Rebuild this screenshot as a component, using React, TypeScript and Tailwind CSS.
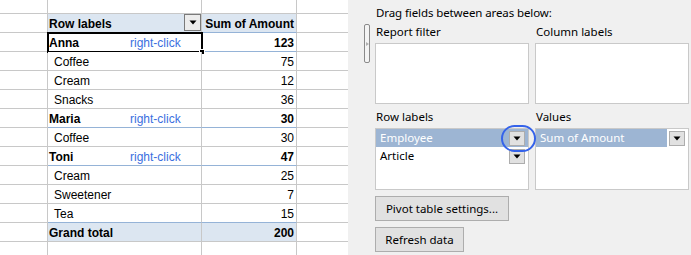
import React from "react";

type Row = {
  label: string;
  value?: string;
  kind: "top" | "header" | "group" | "item" | "total" | "blank";
  blueBottom?: boolean;
  selected?: boolean;
};

const rows: Row[] = [
  { label: "", kind: "top" },
  { label: "Row labels", value: "Sum of Amount", kind: "header", blueBottom: true },
  { label: "Anna", value: "123", kind: "group", blueBottom: true, selected: true },
  { label: "Coffee", value: "75", kind: "item" },
  { label: "Cream", value: "12", kind: "item" },
  { label: "Snacks", value: "36", kind: "item" },
  { label: "Maria", value: "30", kind: "group", blueBottom: true },
  { label: "Coffee", value: "30", kind: "item" },
  { label: "Toni", value: "47", kind: "group", blueBottom: true },
  { label: "Cream", value: "25", kind: "item" },
  { label: "Sweetener", value: "7", kind: "item" },
  { label: "Tea", value: "15", kind: "item", blueBottom: true },
  { label: "Grand total", value: "200", kind: "total" },
  { label: "", kind: "blank" },
];

function Triangle() {
  return (
    <svg width="8" height="5" viewBox="0 0 8 5">
      <path d="M0.5 0.5 H7.5 L4 4.5 Z" fill="#000" />
    </svg>
  );
}

function DropButton() {
  return (
    <div className="w-[16px] h-[15px] bg-[#e1e1e1] border border-[#adadad] flex items-center justify-center">
      <Triangle />
    </div>
  );
}

function Sheet() {
  return (
    <div className="w-[348px] h-[255px] bg-white overflow-hidden font-['Liberation_Sans',Arial,sans-serif] text-[12px] text-black">
      {rows.map((r, i) => {
        const h = r.kind === "top" ? "h-[14px]" : "h-[19px]";
        const pivotBorder = r.blueBottom ? "border-b-[#95b3d7]" : "border-b-[#c8c8c8]";
        const bg = r.kind === "header" || r.kind === "total" ? "bg-[#dce6f1]" : "bg-white";
        const bold = r.kind === "header" || r.kind === "group" || r.kind === "total";
        const isPivot = r.kind !== "top" && r.kind !== "blank";
        return (
          <div key={i} className={`grid grid-cols-[48px_154px_95px_51px] ${h}`}>
            <div className="border-r border-b border-[#c8c8c8]" />
            <div
              className={`relative border-r border-b border-r-[#c8c8c8] ${isPivot ? pivotBorder : "border-b-[#c8c8c8]"} ${isPivot ? bg : ""} flex items-center pt-[2px] leading-[16px]`}
            >
              {isPivot && (
                <span className={`${bold ? "font-bold pl-[1px]" : "pl-[6px]"} whitespace-nowrap`}>
                  {r.label}
                </span>
              )}
              {r.kind === "group" && (
                <span className="absolute left-[82px] top-[2px] text-[#3c6fe0] leading-[16px]">right-click</span>
              )}
              {r.kind === "header" && (
                <div className="absolute right-[0px] top-[0px] w-[17px] h-[17px] bg-[#ececec] border border-[#7a7a7a] flex items-center justify-center">
                  <Triangle />
                </div>
              )}
              {r.selected && (
                <div className="absolute -left-[1px] -top-[1px] w-[156px] h-[21px] border-2 border-black">
                  <div className="absolute -right-[4px] -bottom-[4px] w-[6px] h-[6px] bg-black border border-white" />
                </div>
              )}
            </div>
            <div
              className={`border-r border-b border-r-[#c8c8c8] ${isPivot ? pivotBorder : "border-b-[#c8c8c8]"} ${isPivot ? bg : ""} flex items-center justify-end pr-[2px] pt-[2px] leading-[16px]`}
            >
              {isPivot && <span className={bold ? "font-bold" : ""}>{r.value}</span>}
            </div>
            <div className="border-b border-[#c8c8c8]" />
          </div>
        );
      })}
    </div>
  );
}

function Panel() {
  return (
    <div className="w-[343px] h-[255px] bg-[#f0f0f0] flex font-['Noto_Sans',sans-serif] text-[11.5px] text-black">
      <div className="w-[16px]" />
      <div className="w-[6px] pt-[24px]">
        <div className="w-[6px] h-[39px] border border-[#8a8a8a] rounded-[2px] flex items-center justify-center bg-[#f4f4f4]">
          <svg width="3" height="4" viewBox="0 0 3 4">
            <path d="M0 0 L3 2 L0 4 Z" fill="#b0b0b0" />
          </svg>
        </div>
      </div>
      <div className="w-[5px]" />
      <div className="flex flex-col w-[314px]">
        <div className="h-[21px] pt-[5px] pl-[1px] leading-[16px] tracking-[-0.1px]">Drag fields between areas below:</div>
        <div className="grid grid-cols-[154px_154px] gap-x-[6px]">
          <div className="h-[22px] pl-[1px] leading-[22px]">Report filter</div>
          <div className="h-[22px] pl-[1px] leading-[22px]">Column labels</div>
          <div className="h-[61px] bg-white border border-[#c9c9c9]" />
          <div className="h-[61px] bg-white border border-[#c9c9c9]" />
          <div className="h-[24px] pl-[1px] pt-[5px] leading-[16px]">Row labels</div>
          <div className="h-[24px] pl-[1px] pt-[5px] leading-[16px]">Values</div>
          <div className="relative h-[62px] bg-white border border-[#c9c9c9]">
            <div className="h-[18px] bg-[#9db5d3] text-white flex items-center pl-[4px] pr-[3px] justify-between">
              <span>Employee</span>
              <DropButton />
            </div>
            <div className="h-[18px] flex items-center pl-[4px] pr-[3px] justify-between">
              <span>Article</span>
              <DropButton />
            </div>
            <div className="absolute left-[125px] -top-[4px] w-[35px] h-[27px] rounded-full border-2 border-[#3563ea]" />
          </div>
          <div className="h-[62px] bg-white border border-[#c9c9c9]">
            <div className="h-[18px] flex items-center pr-[3px]">
              <div className="h-[18px] flex-1 bg-[#9db5d3] text-white flex items-center pl-[4px] mr-[2px]">
                Sum of Amount
              </div>
              <DropButton />
            </div>
          </div>
        </div>
        <div className="mt-[6px] w-[134px] h-[25px] bg-[#e1e1e1] border border-[#adadad] flex items-center justify-center">
          Pivot table settings...
        </div>
        <div className="mt-[6px] w-[89px] h-[25px] bg-[#e1e1e1] border border-[#adadad] flex items-center justify-center">
          Refresh data
        </div>
      </div>
    </div>
  );
}

export default function App() {
  return (
    <div className="flex w-[691px] h-[255px] overflow-hidden">
      <Sheet />
      <Panel />
    </div>
  );
}
